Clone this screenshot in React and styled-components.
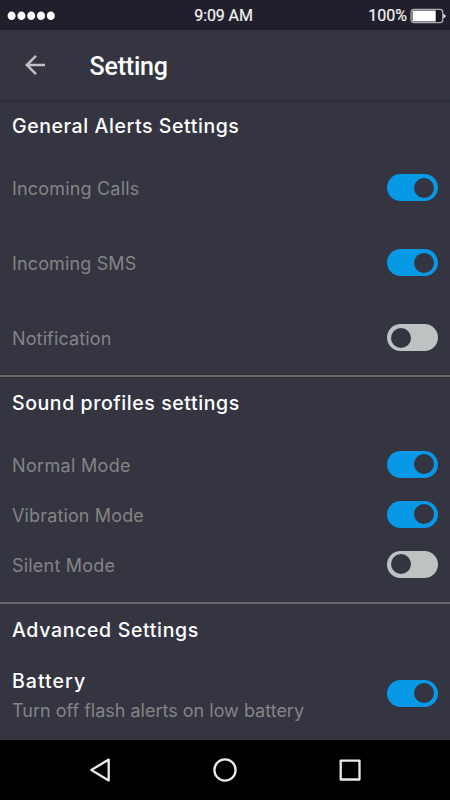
import React, { useState } from "react";
import styled, { createGlobalStyle } from "styled-components";

const GlobalStyle = createGlobalStyle`
  * { box-sizing: border-box; }
  body { margin: 0; background: #343541; }
`;

const Screen = styled.div`
  display: flex;
  flex-direction: column;
  width: 450px;
  height: 800px;
  overflow: hidden;
  background: #343541;
  color: #fff;
  font-family: Inter, "Open Sans", sans-serif;
`;

const StatusBar = styled.header`
  display: grid;
  grid-template-columns: 1fr auto 1fr;
  align-items: center;
  flex: none;
  height: 30px;
  padding: 2px 4px 0 7px;
  background: #201f2b;
  font: 400 16px/28px Roboto, sans-serif;
  color: #f4f4f4;
  -webkit-text-stroke: 0.2px #f4f4f4;
`;

const Signal = styled.svg`
  display: block;
`;

const Clock = styled.span`
  margin-right: 6px;
  letter-spacing: -0.1px;
`;

const BatteryStatus = styled.div`
  display: flex;
  justify-content: flex-end;
  align-items: center;
  gap: 3px;
`;

const AppBar = styled.div`
  display: flex;
  align-items: center;
  flex: none;
  height: 70px;
  padding-left: 24px;
  box-shadow: 0 1px 4px rgba(18, 18, 26, 0.5);
`;

const BackButton = styled.button`
  display: flex;
  width: 22px;
  height: 22px;
  margin-right: 43.5px;
  padding: 0;
  border: 0;
  background: none;
`;

const Title = styled.h1`
  margin: 4px 0 0;
  font: 500 25px/30px Roboto, sans-serif;
  letter-spacing: -0.2px;
`;

const Content = styled.main`
  flex: 1;
  min-height: 0;
`;

const Section = styled.section`
  height: ${(p) => p.$height}px;
  border-bottom: ${(p) => (p.$last ? "0" : "2px solid #696968")};
`;

const Heading = styled.h2`
  height: 51px;
  margin: 0 0 ${(p) => p.$gap || 0}px;
  padding-left: 12px;
  font-size: 19.5px;
  font-weight: 500;
  line-height: 53px;
  letter-spacing: ${(p) => p.$tracking}px;
`;

const Row = styled.div`
  display: flex;
  align-items: center;
  justify-content: space-between;
  height: ${(p) => p.$height}px;
  padding: 0 12px;
`;

const Label = styled.span`
  padding-top: ${(p) => p.$drop || 0}px;
  font-size: 18px;
  line-height: 30px;
  color: #848484;
  letter-spacing: ${(p) => p.$tracking}px;
`;

const TextStack = styled.div`
  display: flex;
  flex-direction: column;
  padding-top: 3px;
`;

const RowTitle = styled.span`
  font-size: 19.5px;
  font-weight: 500;
  line-height: 30px;
  letter-spacing: 1.05px;
`;

const Toggle = styled.button`
  display: flex;
  align-items: center;
  justify-content: ${(p) => (p.$on ? "flex-end" : "flex-start")};
  flex: none;
  width: 51px;
  height: 27px;
  margin-bottom: 1.5px;
  padding: 0 4px;
  border: 0;
  border-radius: 14px;
  background: ${(p) => (p.$on ? "#0799e6" : "#bdc3c2")};
`;

const Knob = styled.span`
  width: 20px;
  height: 20px;
  border-radius: 50%;
  background: #343541;
`;

const NavBar = styled.nav`
  display: flex;
  justify-content: space-between;
  align-items: center;
  flex: none;
  height: 60px;
  padding: 0 85px;
  background: #000;
`;

const NavIcon = styled.svg`
  width: 30px;
  height: 30px;
  fill: none;
  stroke: #ebebeb;
  stroke-width: 2.3;
  stroke-linejoin: round;
`;

function Switch({ initial, label }) {
  const [on, setOn] = useState(initial);
  return (
    <Toggle
      type="button"
      role="switch"
      aria-checked={on}
      aria-label={label}
      $on={on}
      onClick={() => setOn(!on)}
    >
      <Knob />
    </Toggle>
  );
}

const generalAlerts = [
  { label: "Incoming Calls", on: true, tracking: 0.18 },
  { label: "Incoming SMS", on: true, tracking: 0.14 },
  { label: "Notification", on: false, tracking: 0.13 },
];

const soundProfiles = [
  { label: "Normal Mode", on: true, tracking: 0.33 },
  { label: "Vibration Mode", on: true, tracking: 0.14 },
  { label: "Silent Mode", on: false, tracking: 0.2 },
];

function Rows({ items, height, drop }) {
  return items.map(({ label, on, tracking }) => (
    <Row key={label} $height={height}>
      <Label $tracking={tracking} $drop={drop}>{label}</Label>
      <Switch initial={on} label={label} />
    </Row>
  ));
}

export default function App() {
  return (
    <>
      <GlobalStyle />
      <Screen>
        <StatusBar>
          <Signal width="50" height="10" fill="#fff">
            {[0, 1, 2, 3, 4].map((i) => (
              <ellipse key={i} cx={4.6 + i * 9.8} cy="4.8" rx="4" ry="4.3" />
            ))}
          </Signal>
          <Clock>9:09 AM</Clock>
          <BatteryStatus>
            100%
            <svg width="36" height="16" viewBox="0 0 36 16">
              <rect x="1.1" y="1.4" width="31.6" height="13.2" rx="2.6" fill="#171923" stroke="#a9aaad" strokeWidth="1.3" />
              <path d="M2.5 2.5H25.7V13.5H2.5Z" fill="#fff" />
              <path d="M33.3 5.5 35.7 7.6V8.5L33.3 10.7Z" fill="#dedee0" />
            </svg>
          </BatteryStatus>
        </StatusBar>

        <AppBar>
          <BackButton type="button" aria-label="Back">
            <svg width="22" height="22" fill="none" stroke="#bfc0c3" strokeWidth="2.5">
              <path d="M21 11H3M12 1.8 2.8 11 12 20.2" />
            </svg>
          </BackButton>
          <Title>Setting</Title>
        </AppBar>

        <Content>
          <Section $height={277}>
            <Heading $tracking={0.58}>General Alerts Settings</Heading>
            <Rows items={generalAlerts} height={75} />
          </Section>
          <Section $height={227}>
            <Heading $tracking={0.58} $gap={12}>Sound profiles settings</Heading>
            <Rows items={soundProfiles} height={50} drop={2} />
          </Section>
          <Section $height={136} $last>
            <Heading $tracking={0.66}>Advanced Settings</Heading>
            <Row $height={78}>
              <TextStack>
                <RowTitle>Battery</RowTitle>
                <Label $tracking={0}>Turn off flash alerts on low battery</Label>
              </TextStack>
              <Switch initial label="Battery" />
            </Row>
          </Section>
        </Content>

        <NavBar>
          <NavIcon viewBox="0 0 30 30">
            <path d="M23.7 4.6V25.4L6.3 15Z" />
          </NavIcon>
          <NavIcon viewBox="0 0 30 30">
            <circle cx="15" cy="15" r="10.6" />
          </NavIcon>
          <NavIcon viewBox="0 0 30 30">
            <rect x="5.7" y="5.7" width="18.8" height="18.8" />
          </NavIcon>
        </NavBar>
      </Screen>
    </>
  );
}
